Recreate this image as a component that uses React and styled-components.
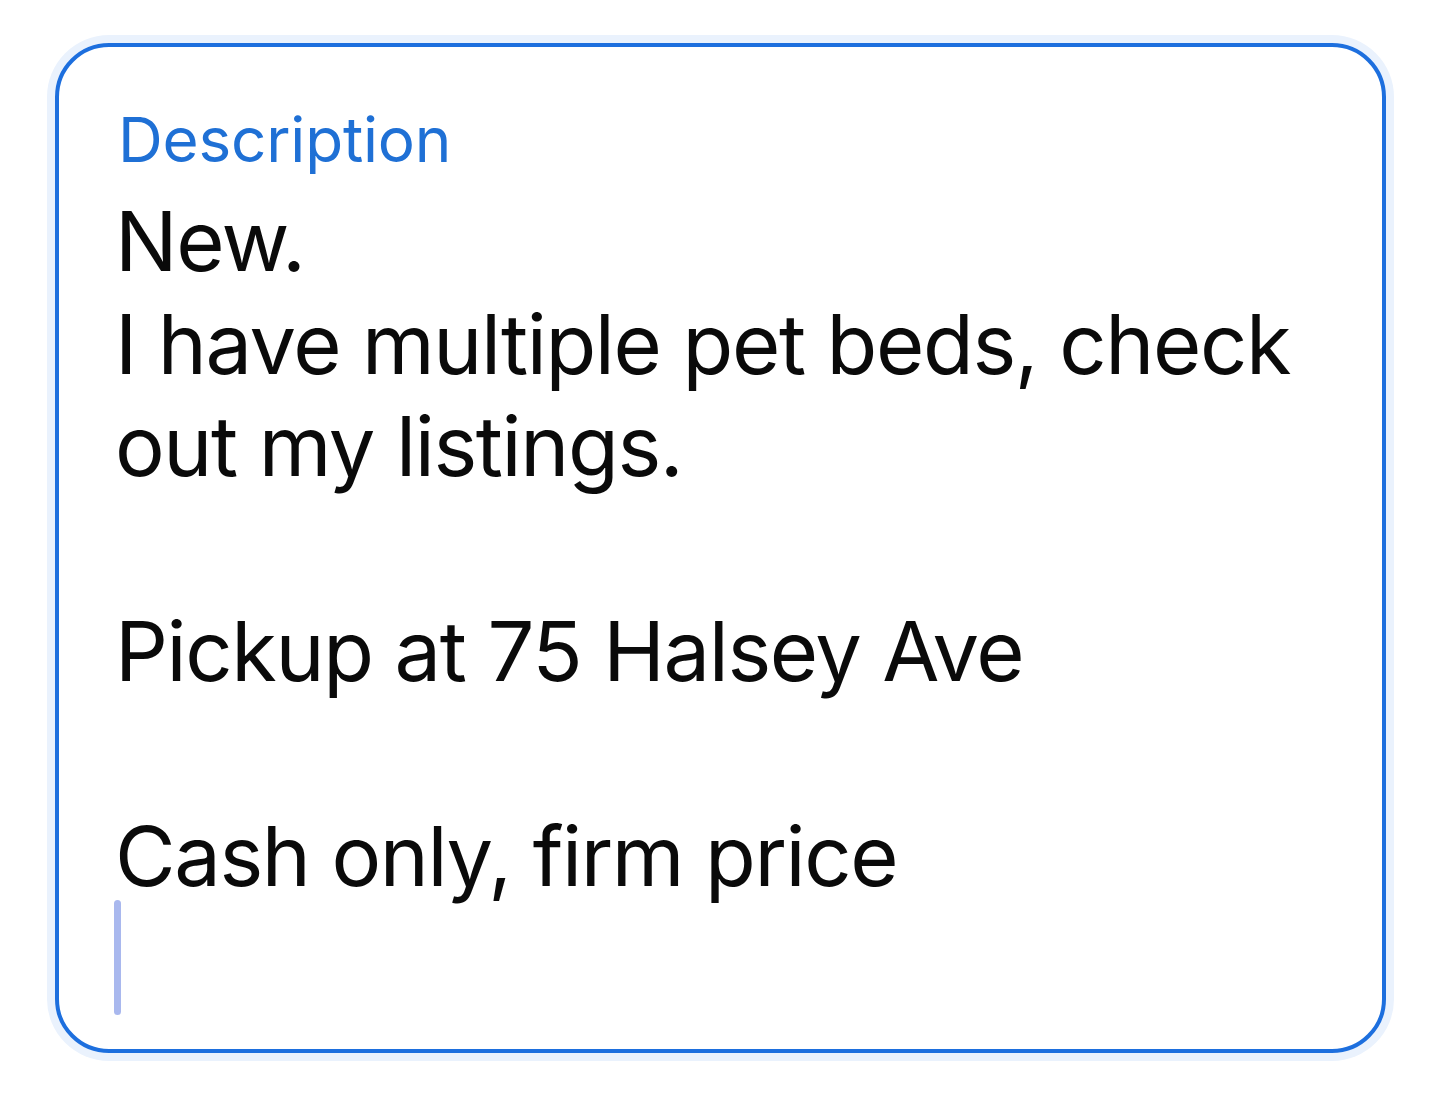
import React from 'react'
import styled, { createGlobalStyle } from 'styled-components'

const GlobalStyle = createGlobalStyle`
    html, body {
        margin: 0;
        padding: 0;
        background: #fff;
    }
    body {
        font-family: Inter, "Noto Sans", "Liberation Sans", sans-serif;
        -webkit-font-smoothing: antialiased;
    }
`

const Page = styled.div`
    padding: 43px 54px 40px 55px;
`

const Field = styled.div`
    box-sizing: border-box;
    width: 1331px;
    height: 1010px;
    border: 4px solid #1d6fde;
    border-radius: 54px;
    box-shadow: 0 0 0 8px #eaf2fd;
    padding: 56px 52px 0 56px;
    display: flex;
    flex-direction: column;
`

const Label = styled.div`
    color: #1f70d5;
    font-size: 62px;
    line-height: 74px;
    letter-spacing: -0.2px;
    padding-left: 3px;
    margin-bottom: 13px;
`

const Body = styled.div`
    color: #0a0a0a;
    font-size: 83px;
    line-height: 102.5px;
    letter-spacing: -1.4px;
`

const Line = styled.div`
    min-height: 102.5px;
    white-space: pre;
`

const Caret = styled.div`
    width: 7px;
    height: 115px;
    border-radius: 4px;
    background: #a9b8ee;
    margin: -8px 0 0 -1px;
`

const lines = [
    'New.',
    'I have multiple pet beds, check',
    'out my listings.',
    '',
    'Pickup at 75 Halsey Ave',
    '',
    'Cash only, firm price',
]

export default function App() {
    return (
        <Page>
            <GlobalStyle />
            <Field>
                <Label>Description</Label>
                <Body>
                    {lines.map((text, i) => (
                        <Line key={i}>{text}</Line>
                    ))}
                </Body>
                <Caret />
            </Field>
        </Page>
    )
}
